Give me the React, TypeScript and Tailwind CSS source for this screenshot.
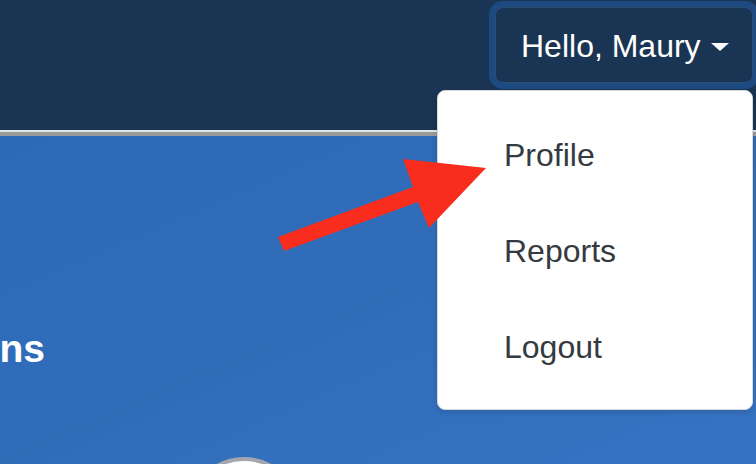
import React from "react";

const menuItems = ["Profile", "Reports", "Logout"];

function Caret() {
  return (
    <svg width="18" height="8" viewBox="0 0 18 8" className="ml-[10px] mt-[1px]">
      <path d="M0 0 L18 0 L9 8 Z" fill="#ffffff" />
    </svg>
  );
}

function Arrow() {
  return (
    <svg
      width="756"
      height="464"
      viewBox="0 0 756 464"
      className="absolute inset-0 pointer-events-none"
    >
      <polygon
        points="278,237 413,187 403,159 486,168 429,228 418,202 284,251"
        fill="#f92d1e"
      />
    </svg>
  );
}

export default function App() {
  return (
    <div
      className="relative w-[756px] h-[464px] overflow-hidden flex flex-col"
      style={{ fontFamily: '"Liberation Sans", Arial, sans-serif' }}
    >
      {/* navbar */}
      <header className="h-[130px] bg-[#1a3553] flex justify-end items-start pt-[7px] pr-[3px]">
        <button className="h-[76px] w-[258px] rounded-[8px] border border-[#2b4d74] bg-[#1a3553] ring-[6px] ring-[#1d4a80] flex items-center pl-[25px] pt-[2px] text-white text-[32px] leading-none">
          Hello, Maury
          <Caret />
        </button>
      </header>
      <div className="h-[2px] bg-[#e1e4e8]" />
      <div className="h-[4px] bg-[#9a9a9a]" />

      {/* hero */}
      <main className="flex-1 bg-gradient-to-br from-[#2e69b8] via-[#306db9] to-[#3673c3] flex flex-col">
        <div className="w-[45px] flex justify-end mt-[191px]">
          <h1 className="whitespace-nowrap text-white font-bold text-[39px] leading-[44px]">
            Locations
          </h1>
        </div>
        <div className="flex-1" />
        <div className="ml-[188px] w-[112px] h-[112px] -mb-[105px] rounded-full border-[4px] border-[#a3a7ad] bg-white" />
      </main>

      {/* dropdown menu */}
      <div className="absolute left-[437px] top-[90px] w-[316px] h-[320px] bg-white rounded-[8px] border border-[#d6d9dc] shadow-[0_2px_6px_rgba(0,0,0,0.15)] pt-[16px] pb-[14px]">
        {menuItems.map((item) => (
          <div
            key={item}
            className="h-[96px] px-[66px] flex items-center text-[32px] leading-[48px] text-[#343a40]"
          >
            {item}
          </div>
        ))}
      </div>

      <Arrow />
    </div>
  );
}
